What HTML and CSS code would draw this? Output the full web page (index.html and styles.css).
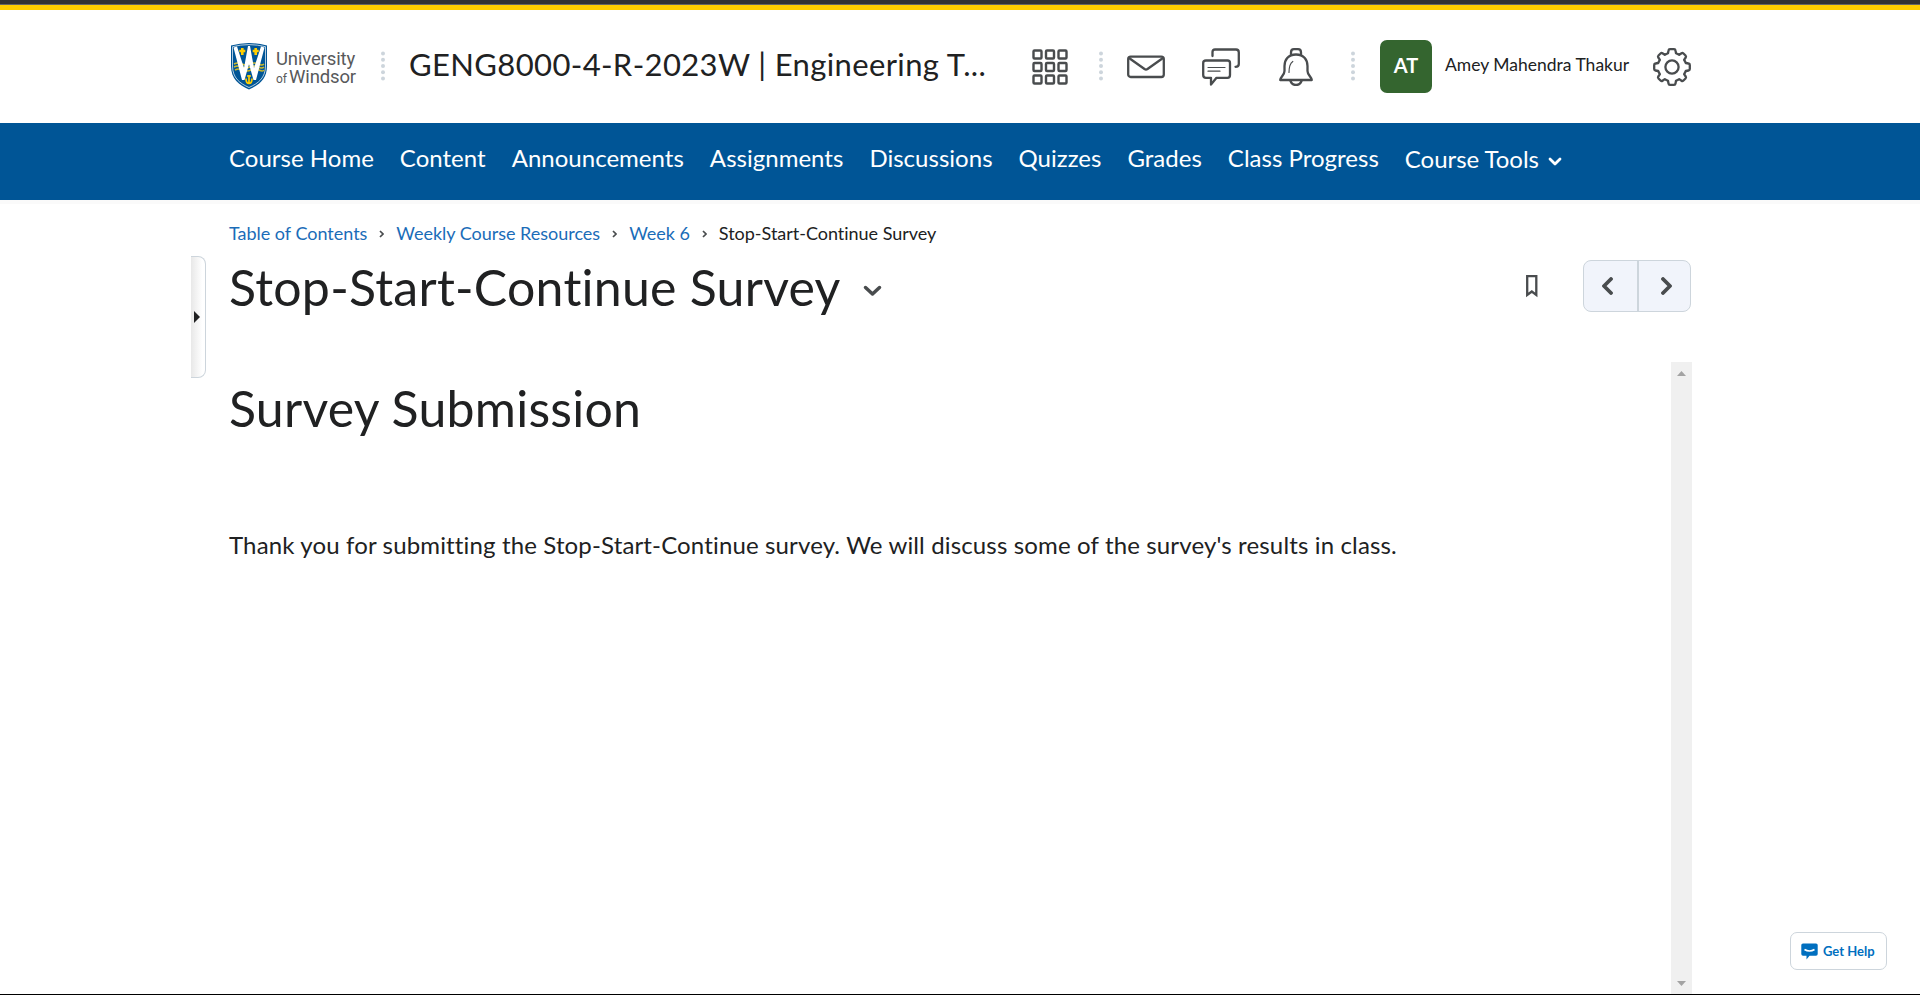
FILE: index.html
```html
<!DOCTYPE html>
<html lang="en">
<head>
<meta charset="utf-8">
<title>Stop-Start-Continue Survey</title>
<link rel="stylesheet" href="styles.css">
</head>
<body>
<div class="page">
<header class="header">
  <a class="logo">
    <svg class="shield" width="38" height="48" viewBox="0 0 38 48">
      <path d="M1 3.500Q19-1.500 37 3.500V24C37 37 29 43 19 47.500C9 43 1 37 1 24Z" fill="#005596"/>
      <path d="M2.500 4.700Q19 .5 35.500 4.700V24C35.500 36 28 41.500 19 45.500C10 41.500 2.500 36 2.500 24Z" fill="none" stroke="#fff" stroke-width=".7"/>
      <path d="M4 22q4-2 8 0t8 0 8 0 6 0M4 25q4-2 8 0t8 0 8 0 6 0M5 28q4-2 8 0t8 0 8 0 5 0" fill="none" stroke="#cdb928" stroke-width="1.500"/>
      <path d="M3.500 5.500L7 4.500L14 26L18 4H20L24 26L31 4.500L34.500 5.500L26 38H23.500L19 22L14.500 38H12Z" fill="#fff"/>
      <path d="M12.300 6v7M9.300 9h6M25.700 6v7M22.700 9h6" stroke="#ffce00" stroke-width="2.600"/>
      <path d="M19 33v8M16 36.500q0 5 3 5t3-5M17 34h4" fill="none" stroke="#ffce00" stroke-width="1.700"/>
    </svg>
    <span class="wordmark"><span>University</span><span><small>of</small>Windsor</span></span>
  </a>
  <svg class="dots dots-a" width="4" height="30" viewBox="0 0 4 30"><g fill="#cdd5dc"><circle cx="2" cy="2.500" r="2"/><circle cx="2" cy="8.750" r="2"/><circle cx="2" cy="15" r="2"/><circle cx="2" cy="21.250" r="2"/><circle cx="2" cy="27.500" r="2"/></g></svg>
  <div class="course">GENG8000-4-R-2023W | Engineering T...</div>
  <svg class="icon grid-icon" width="36" height="36" viewBox="0 0 36 36"><g fill="none" stroke="#494c4e" stroke-width="2.400"><rect x="1.500" y="1.500" width="8" height="8" rx="1"/><rect x="14" y="1.500" width="8" height="8" rx="1"/><rect x="26.500" y="1.500" width="8" height="8" rx="1"/><rect x="1.500" y="14" width="8" height="8" rx="1"/><rect x="14" y="14" width="8" height="8" rx="1"/><rect x="26.500" y="14" width="8" height="8" rx="1"/><rect x="1.500" y="26.500" width="8" height="8" rx="1"/><rect x="14" y="26.500" width="8" height="8" rx="1"/><rect x="26.500" y="26.500" width="8" height="8" rx="1"/></g></svg>
  <svg class="dots dots-b" width="4" height="30" viewBox="0 0 4 30"><g fill="#cdd5dc"><circle cx="2" cy="2.500" r="2"/><circle cx="2" cy="8.750" r="2"/><circle cx="2" cy="15" r="2"/><circle cx="2" cy="21.250" r="2"/><circle cx="2" cy="27.500" r="2"/></g></svg>
  <svg class="icon mail-icon" width="38" height="38" viewBox="0 0 38 38"><g fill="none" stroke="#494c4e" stroke-width="2.300" stroke-linejoin="round"><rect x="1.200" y="8.600" width="35.600" height="20.400" rx="2.500"/><path d="M2 10L17.500 21Q19 22 20.500 21L36 10"/></g></svg>
  <svg class="icon chat-icon" width="38" height="38" viewBox="0 0 38 38"><g fill="none" stroke="#494c4e" stroke-width="2.300" stroke-linecap="round" stroke-linejoin="round"><path d="M10.500 8V4Q10.500 1.500 13 1.500H34Q36.800 1.500 36.800 4.500V16Q36.800 18.800 33.500 18.800"/><path d="M4 12.500H25.500Q28 12.500 28 15V27Q28 29.800 25.500 29.800H14.500L9 36.500V29.800H4Q1.200 29.800 1.200 27V15Q1.200 12.500 4 12.500Z"/><path d="M6 19.500H23M6 23.200H18" stroke-width="1.200"/></g></svg>
  <svg class="icon bell-icon" width="34" height="38" viewBox="0 0 34 38"><g fill="none" stroke="#494c4e" stroke-width="2.300" stroke-linecap="round" stroke-linejoin="round"><path d="M12 7V4.500Q12 1.200 15 1.200H19Q22 1.200 22 4.500V7"/><path d="M17 6.500C9 6.500 5.500 12 5.500 18V23C5.500 27 1.500 29 1.200 32H32.800C32.500 29 28.500 27 28.500 23V18C28.500 12 25 6.500 17 6.500Z"/><path d="M11.500 33Q13 37 17 37T22.500 33"/><path d="M13.800 13.500Q10 16 10 24.500" stroke-width="1.200"/></g></svg>
  <svg class="dots dots-c" width="4" height="30" viewBox="0 0 4 30"><g fill="#cdd5dc"><circle cx="2" cy="2.500" r="2"/><circle cx="2" cy="8.750" r="2"/><circle cx="2" cy="15" r="2"/><circle cx="2" cy="21.250" r="2"/><circle cx="2" cy="27.500" r="2"/></g></svg>
  <div class="avatar">AT</div>
  <div class="user">Amey Mahendra Thakur</div>
  <svg class="icon gear-icon" width="38" height="38" viewBox="0 0 38 38"><g fill="none" stroke="#494c4e" stroke-width="2.300" stroke-linejoin="round"><circle cx="19" cy="19" r="6.600"/><path d="M15.500 2.500Q15.700 1.200 17 1.200H21Q22.300 1.200 22.500 2.500L23 5.200Q24.800 5.900 26.200 6.900L28.500 5.300Q29.500 4.600 30.500 5.500L32.500 7.500Q33.400 8.500 32.700 9.500L31.100 11.800Q32.100 13.200 32.800 15L35.500 15.500Q36.800 15.700 36.800 17V21Q36.800 22.300 35.500 22.500L32.800 23Q32.100 24.800 31.100 26.200L32.700 28.500Q33.400 29.500 32.500 30.500L30.500 32.500Q29.500 33.400 28.500 32.700L26.200 31.100Q24.800 32.100 23 32.800L22.500 35.500Q22.300 36.800 21 36.800H17Q15.700 36.800 15.500 35.500L15 32.800Q13.200 32.100 11.800 31.100L9.500 32.700Q8.500 33.400 7.500 32.500L5.500 30.500Q4.600 29.500 5.300 28.500L6.900 26.200Q5.900 24.800 5.200 23L2.500 22.500Q1.200 22.300 1.200 21V17Q1.200 15.700 2.500 15.500L5.200 15Q5.900 13.200 6.900 11.800L5.300 9.500Q4.600 8.500 5.500 7.500L7.500 5.500Q8.500 4.600 9.500 5.300L11.800 6.900Q13.200 5.900 15 5.200Z"/></g></svg>
</header>
<nav class="nav">
  <a>Course Home</a><a>Content</a><a>Announcements</a><a>Assignments</a><a>Discussions</a><a>Quizzes</a><a>Grades</a><a>Class Progress</a>
  <a class="tools">Course Tools<svg width="14" height="9" viewBox="0 0 14 9"><path d="M2 2L7 7L12 2" fill="none" stroke="#fff" stroke-width="2.800" stroke-linecap="round" stroke-linejoin="round"/></svg></a>
</nav>
<main class="main">
  <div class="handle"><svg width="6" height="12" viewBox="0 0 6 12"><path d="M0 0L6 6L0 12Z" fill="#202122"/></svg></div>
  <div class="content">
    <div class="crumbs">
      <a>Table of Contents</a><svg width="5" height="8" viewBox="0 0 5 8"><path d="M1 1L4 4L1 7" fill="none" stroke="#494c4e" stroke-width="1.700"/></svg>
      <a>Weekly Course Resources</a><svg width="5" height="8" viewBox="0 0 5 8"><path d="M1 1L4 4L1 7" fill="none" stroke="#494c4e" stroke-width="1.700"/></svg>
      <a>Week 6</a><svg width="5" height="8" viewBox="0 0 5 8"><path d="M1 1L4 4L1 7" fill="none" stroke="#494c4e" stroke-width="1.700"/></svg>
      <span>Stop-Start-Continue Survey</span>
    </div>
    <div class="titlebar">
      <h1>Stop-Start-Continue Survey</h1>
      <svg class="chev" width="19" height="12" viewBox="0 0 19 12"><path d="M2.500 2.500L9.500 9L16.500 2.500" fill="none" stroke="#494c4e" stroke-width="3.500" stroke-linecap="round" stroke-linejoin="round"/></svg>
      <svg class="bookmark" width="12" height="23" viewBox="0 0 12 23"><path d="M1.200 1.200H10.300V20L5.800 16.500L1.200 20Z" fill="none" stroke="#494c4e" stroke-width="2.300"/></svg>
      <div class="pager">
        <span class="prev"><svg width="11" height="18" viewBox="0 0 11 18"><path d="M9 2L2 9L9 16" fill="none" stroke="#494c4e" stroke-width="3.800" stroke-linecap="round" stroke-linejoin="round"/></svg></span>
        <span class="next"><svg width="11" height="18" viewBox="0 0 11 18"><path d="M2 2L9 9L2 16" fill="none" stroke="#494c4e" stroke-width="3.800" stroke-linecap="round" stroke-linejoin="round"/></svg></span>
      </div>
    </div>
    <div class="frame">
      <article>
        <h2>Survey Submission</h2>
        <p>Thank you for submitting the Stop-Start-Continue survey. We will discuss some of the survey's results in class.</p>
      </article>
      <div class="scrollbar">
        <svg width="9" height="5" viewBox="0 0 9 5"><path d="M4.500 0L9 5H0Z" fill="#a3a3a3"/></svg>
        <svg width="9" height="5" viewBox="0 0 9 5"><path d="M0 0H9L4.500 5Z" fill="#a3a3a3"/></svg>
      </div>
    </div>
  </div>
</main>
<a class="help"><svg width="17" height="17" viewBox="0 0 17 17"><path d="M2 .5H15Q16.700 .5 16.700 2V11Q16.700 12.800 15 12.800H8.500L5.500 16.500V12.800H2Q.3 12.800 .3 11V2Q.3 .5 2 .5Z" fill="#006fbf"/><path d="M3.500 6.500Q8.500 9.500 13.500 6.500" fill="none" stroke="#fff" stroke-width="1.700"/></svg>Get Help</a>
</div>
</body>
</html>
```
FILE: styles.css
```css
* { box-sizing: border-box; }
body { margin: 0; background: #fff; color: #202122; font-family: Lato, "Liberation Sans", sans-serif; font-variant-ligatures: none; }
svg { display: block; flex: none; }
.page { height: 995px; display: flex; flex-direction: column; overflow: hidden; border-top: 4px solid #333; border-bottom: 1px solid #000; position: relative; }
.header { height: 119px; flex: none; border-top: 1px solid #666; padding: 5px 229px 0; display: flex; align-items: center; box-shadow: inset 0 5px 0 #ffce00; white-space: nowrap; }
.header > * { flex: none; }
.logo { display: flex; align-items: center; width: 152px; gap: 8px; padding-left: 1px; }
.shield { margin-top: -2px; }
.wordmark { display: flex; flex-direction: column; font: 400 18.500px/18px Roboto, sans-serif; color: #58595b; padding-top: 3px; letter-spacing: -0.150px; }
.wordmark span { display: flex; align-items: baseline; height: 18px; }
.wordmark small { font-size: 12px; line-height: 12px; letter-spacing: 0; margin-right: 2px; }
.dots { margin-top: -1px; }
.dots-a { margin-right: 24px; }
.course { width: 623px; font-size: 31px; line-height: 40px; letter-spacing: 0.370px; padding-bottom: 5px; }
.dots-b { margin: -1px 24px 0 31px; }
.mail-icon { margin-right: 37px; }
.chat-icon { margin-right: 39px; }
.bell-icon { margin-right: 38px; }
.dots-c { margin-right: 25px; }
.avatar { width: 52px; height: 53px; border-radius: 7px; background: #34652f; color: #fff; font-weight: 700; font-size: 20px; line-height: 50px; text-align: center; }
.user { width: 221px; padding-left: 13px; font-size: 17.500px; line-height: 24px; padding-bottom: 3px; }
.nav { height: 77px; flex: none; background: #005596; padding: 0 229px; display: flex; gap: 26px; color: #fff; font-size: 24px; line-height: 70px; letter-spacing: 0.020px; white-space: nowrap; }
.nav .tools { display: flex; align-items: center; gap: 9px; line-height: 72px; height: 72px; letter-spacing: -0.030px; }
.nav .tools svg { margin-top: 5px; }
.main { flex: 1; min-height: 0; display: flex; padding: 0 228px 0 191px; box-shadow: inset 0 4px 0 #fafafa; }
.handle { width: 15px; height: 122px; margin: 56px 23px 0 0; flex: none; border: 1px solid #cdd5dc; border-left: 0; border-radius: 0 8px 8px 0; background: linear-gradient(90deg, #e8e8e8, #fff 80%); display: flex; align-items: center; padding-left: 3px; }
.content { flex: 1; min-width: 0; display: flex; flex-direction: column; }
.crumbs { display: flex; align-items: center; gap: 12px; padding-top: 20px; font-size: 18px; letter-spacing: -0.015px; line-height: 24px; height: 45px; white-space: nowrap; }
.crumbs a { color: #1a6cb8; }
.crumbs svg { margin-top: 2px; }
.titlebar { height: 117px; flex: none; display: flex; white-space: nowrap; }
h1 { margin: 0; font-weight: 400; font-size: 50px; line-height: 60px; padding-top: 12px; width: 634px; letter-spacing: 0.240px; }
.chev { margin-top: 40px; }
.bookmark { margin: 30px 45px 0 auto; }
.pager { width: 108px; height: 52px; margin: 15px 1px 0 0; display: flex; border: 1px solid #cdd5dc; border-radius: 8px; background: #f1f4fb; }
.pager span { width: 53px; flex: none; display: flex; align-items: center; justify-content: center; }
.pager .prev { padding-right: 7px; }
.pager .next { border-left: 2px solid #cdd5dc; padding-left: 3px; }
.frame { flex: 1; display: flex; min-height: 0; }
article { flex: 1; min-width: 0; white-space: nowrap; }
h2 { margin: 0; font-weight: 400; font-size: 50px; line-height: 60px; padding-top: 16px; letter-spacing: 0.240px; }
p { margin: 91px 0 0; font-size: 24px; line-height: 32px; letter-spacing: 0.145px; }
.scrollbar { width: 21px; background: #f0f0f0; display: flex; flex-direction: column; justify-content: space-between; align-items: center; padding: 9px 0 8px; }
.help { position: absolute; left: 1790px; top: 928px; width: 97px; height: 38px; border: 1px solid #cdd5dc; border-radius: 7px; background: #fff; color: #006fbf; font-size: 13px; font-weight: 700; display: flex; align-items: center; gap: 5px; padding-left: 10px; white-space: nowrap; }
```
